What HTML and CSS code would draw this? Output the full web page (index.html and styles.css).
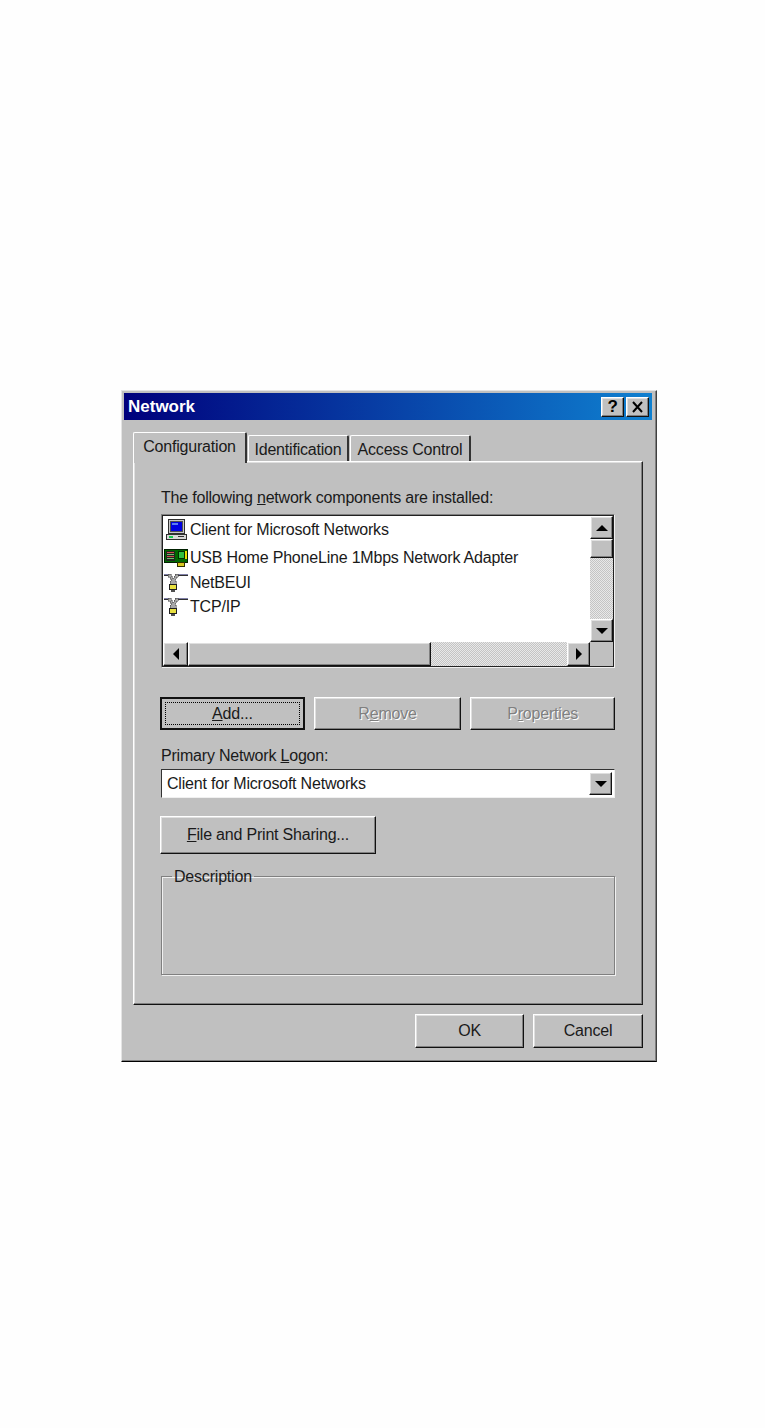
FILE: index.html
```html
<!DOCTYPE html>
<html lang="en">
<head>
    <meta charset="UTF-8">
    <title>Network</title>
    <link rel="stylesheet" href="styles.css">
</head>
<body>
    <div class="dialog">
        <div class="titlebar">
            <span class="title">Network</span>
            <div class="title-buttons">
                <div class="raised title-button help">?</div>
                <div class="raised title-button close">
                    <svg width="13" height="12" viewBox="0 0 13 12"><path d="M2 1l9 10M11 1L2 11" stroke="#000" stroke-width="2" fill="none"/></svg>
                </div>
            </div>
        </div>

        <div class="tabs">
            <div class="tab active">Configuration</div>
            <div class="tab tab-identification">Identification</div>
            <div class="tab tab-access">Access Control</div>
        </div>

        <div class="panel">
            <div class="label">The following <u>n</u>etwork components are installed:</div>

            <div class="list">
                <div class="list-items">
                    <div class="row row-client">
                        <svg class="icon" width="26" height="24" viewBox="0 0 26 24" shape-rendering="crispEdges">
                            <path d="M5.5 1.5h16v14h-16z" fill="#c8c8c8" stroke="#303030"/>
                            <path d="M7.5 3.5h12v10h-12z" fill="#0000e0" stroke="#505050"/>
                            <path d="M9 5h6v2H9z" fill="#5a7cf0"/>
                            <path d="M3.5 16.5h20v5h-20z" fill="#d8d8d8" stroke="#303030"/>
                            <path d="M6 18h4v2H6z" fill="#18c850"/>
                            <path d="M15 18h6v1h-6z" fill="#303030"/>
                        </svg>
                        Client for Microsoft Networks
                    </div>
                    <div class="row row-adapter">
                        <svg class="icon" width="26" height="20" viewBox="0 0 26 20" shape-rendering="crispEdges">
                            <path d="M1.5 1.5h23v13h-23z" fill="#006800" stroke="#002000"/>
                            <path d="M3 3h9v10H3z" fill="#202820"/>
                            <path d="M4 4h7v1H4zM4 8h7v1H4z" fill="#d05050"/>
                            <path d="M4 6h7v1H4zM4 10h7v1H4z" fill="#70c070"/>
                            <path d="M15.5 3.5h6v7h-6z" fill="#30c040" stroke="#003000"/>
                            <path d="M22 3h2v8h-2z" fill="#e8e000"/>
                            <path d="M14.5 14.5h7v4h-7z" fill="#d8c820" stroke="#303000"/>
                        </svg>
                        USB Home PhoneLine 1Mbps Network Adapter
                    </div>
                    <div class="row row-protocol">
                        <svg class="icon" width="26" height="20" viewBox="0 0 26 20" shape-rendering="crispEdges">
                            <path d="M1 1h5v1H1zM14 1h11v1H14z" fill="#8080a8"/>
                            <path d="M1 2h4v1H1zM15 2h10v1H15z" fill="#303030"/>
                            <path d="M5 1h3v2h1v2h2V3h1V1h3v3h-2v2h-1v2h1v4H7V8h1V6H7V4H5z" fill="#a8a8a8" stroke="#404040" stroke-width=".5"/>
                            <path d="M6.5 11.5h7v5h-7z" fill="#e8e040" stroke="#202020"/>
                            <path d="M8 17h4v2H8z" fill="#505050"/>
                        </svg>
                        NetBEUI
                    </div>
                    <div class="row row-protocol">
                        <svg class="icon" width="26" height="20" viewBox="0 0 26 20" shape-rendering="crispEdges">
                            <path d="M1 1h5v1H1zM14 1h11v1H14z" fill="#8080a8"/>
                            <path d="M1 2h4v1H1zM15 2h10v1H15z" fill="#303030"/>
                            <path d="M5 1h3v2h1v2h2V3h1V1h3v3h-2v2h-1v2h1v4H7V8h1V6H7V4H5z" fill="#a8a8a8" stroke="#404040" stroke-width=".5"/>
                            <path d="M6.5 11.5h7v5h-7z" fill="#e8e040" stroke="#202020"/>
                            <path d="M8 17h4v2H8z" fill="#505050"/>
                        </svg>
                        TCP/IP
                    </div>
                </div>

                <div class="vscroll">
                    <div class="raised scroll-btn"><span class="arrow up"></span></div>
                    <div class="raised vthumb"></div>
                    <div class="track"></div>
                    <div class="raised scroll-btn"><span class="arrow down"></span></div>
                </div>

                <div class="hscroll">
                    <div class="raised scroll-btn hbtn-left"><span class="arrow left"></span></div>
                    <div class="raised hthumb"></div>
                    <div class="track"></div>
                    <div class="raised scroll-btn hbtn-right"><span class="arrow right"></span></div>
                </div>
                <div class="corner"></div>
            </div>

            <div class="action-row">
                <button class="raised button default"><span class="focus"><u>A</u>dd...</span></button>
                <button class="raised button remove" disabled>R<u>e</u>move</button>
                <button class="raised button props" disabled>P<u>r</u>operties</button>
            </div>

            <div class="label logon-label">Primary Network <u>L</u>ogon:</div>
            <div class="combo">
                <span class="combo-value">Client for Microsoft Networks</span>
                <div class="raised combo-btn"><span class="arrow down"></span></div>
            </div>

            <button class="raised button sharing"><u>F</u>ile and Print Sharing...</button>

            <fieldset class="group">
                <legend>Description</legend>
            </fieldset>
        </div>

        <div class="footer">
            <button class="raised button footer-button ok">OK</button>
            <button class="raised button footer-button">Cancel</button>
        </div>
    </div>
</body>
</html>
```

FILE: styles.css
```css
body {
    margin: 0;
    background-color: #fefefe;
    font-family: "Liberation Sans", Arial, sans-serif;
    font-size: 16px;
    letter-spacing: -0.2px;
    color: #1a1a1a;
}
.dialog {
    box-sizing: border-box;
    width: 536px;
    height: 672px;
    margin: 390px 0 0 121px;
    padding: 2px 4px 0 2px;
    background-color: #c0c0c0;
    border: 1px solid;
    border-color: #e4e4e4 #404040 #000 #e4e4e4;
    box-shadow: inset -1px -1px #808080;
}
.titlebar {
    display: flex;
    align-items: center;
    justify-content: space-between;
    height: 27px;
    padding: 0 3px 0 4px;
    background: linear-gradient(90deg, #00007c, #0f80d0);
}
.title {
    color: #fff;
    font-weight: bold;
    font-size: 17px;
    letter-spacing: 0;
}
.title-buttons {
    display: flex;
    gap: 2px;
}
.raised {
    box-sizing: border-box;
    background-color: #c0c0c0;
    border: 1px solid;
    border-color: #fff #111 #111 #fff;
    box-shadow: inset -1px -1px #808080, inset 1px 1px #dfdfdf;
}
.title-button {
    display: flex;
    align-items: center;
    justify-content: center;
    width: 23px;
    height: 20px;
    color: #000;
    font-weight: bold;
    font-size: 17px;
}
.tabs {
    display: flex;
    align-items: flex-end;
    height: 29px;
    margin: 12px 0 0 9px;
}
.tab {
    box-sizing: border-box;
    height: 26px;
    padding-top: 4px;
    margin-right: 1px;
    line-height: 20px;
    text-align: center;
    background-color: #c0c0c0;
    border: solid;
    border-width: 1px 2px 0 1px;
    border-color: #fff #333 #000 #fff;
    border-radius: 2px 2px 0 0;
}
.tab.active {
    position: relative;
    width: 114px;
    height: 31px;
    margin-bottom: -2px;
}
.tab-identification {
    width: 101px;
}
.tab-access {
    width: 121px;
}
.panel {
    box-sizing: border-box;
    width: 510px;
    height: 544px;
    margin-left: 9px;
    padding: 27px 27px 0;
    border: 1px solid;
    border-color: #fff #222 #111 #fff;
    box-shadow: inset -1px -1px #808080, inset 1px 1px #dfdfdf;
}
.label {
    line-height: 18px;
}
.list {
    box-sizing: border-box;
    display: grid;
    grid-template-columns: 427px 23px;
    grid-template-rows: 126px 24px;
    width: 454px;
    height: 154px;
    margin-top: 7px;
    padding: 1px;
    background-color: #fff;
    border: 1px solid;
    border-color: #808080 #f0f0f0 #f0f0f0 #808080;
    outline: 1px solid #222;
    outline-offset: -2px;
}
.list-items {
    padding-top: 2px;
    overflow: hidden;
}
.row {
    display: flex;
    align-items: center;
    height: 24px;
    white-space: nowrap;
}
.row .icon {
    flex: none;
    margin-right: 1px;
}
.row-adapter {
    height: 26px;
    margin-top: 3px;
}
.vscroll {
    display: flex;
    flex-direction: column;
}
.hscroll {
    display: flex;
}
.track {
    flex: 1;
    background: repeating-conic-gradient(#e8e8e8 0 25%, #c4c4c4 0 50%) 0 0 / 2px 2px;
}
.scroll-btn {
    display: flex;
    align-items: center;
    justify-content: center;
    flex: none;
    width: 23px;
    height: 23px;
}
.hscroll .scroll-btn {
    height: 24px;
}
.hscroll .hbtn-left {
    width: 25px;
}
.vthumb {
    height: 19px;
}
.hthumb {
    width: 243px;
}
.corner {
    background-color: #c0c0c0;
}
.arrow {
    width: 0;
    height: 0;
    border-style: solid;
    border-color: transparent;
}
.arrow.up {
    border-width: 0 6px 6px;
    border-bottom-color: #000;
}
.arrow.down {
    border-width: 6px 6px 0;
    border-top-color: #000;
}
.arrow.left {
    border-width: 6px 6px 6px 0;
    border-right-color: #000;
}
.arrow.right {
    border-width: 6px 0 6px 6px;
    border-left-color: #000;
}
.button {
    height: 33px;
    padding: 0;
    font-family: inherit;
    font-size: 16px;
    letter-spacing: -0.2px;
    color: #1a1a1a;
}
.button:disabled {
    color: #808080;
    text-shadow: 1px 1px #fff;
}
.action-row {
    display: flex;
    gap: 9px;
    margin: 29px 0 0 -1px;
}
.default {
    width: 145px;
    padding: 4px;
    border-color: #111;
    outline: 1px solid #111;
    outline-offset: -2px;
}
.focus {
    box-sizing: border-box;
    display: block;
    height: 100%;
    line-height: 22px;
    border: 1px dotted #000;
}
.remove {
    width: 148px;
}
.props {
    width: 145px;
}
.logon-label {
    margin-top: 17px;
}
.combo {
    box-sizing: border-box;
    display: flex;
    align-items: center;
    justify-content: space-between;
    width: 454px;
    height: 29px;
    margin-top: 4px;
    padding: 2px;
    background-color: #fff;
    border: 1px solid;
    border-color: #333 #f0f0f0 #f0f0f0 #333;
}
.combo-value {
    padding: 1px 0 0 3px;
}
.combo-btn {
    display: flex;
    align-items: center;
    justify-content: center;
    width: 23px;
    height: 23px;
}
.sharing {
    display: block;
    width: 216px;
    height: 38px;
    margin: 18px 0 0 -1px;
}
.group {
    box-sizing: border-box;
    width: 454px;
    height: 108px;
    margin: 13px 0 0;
    padding: 0;
    border: 1px solid #808080;
    box-shadow: 1px 1px #f0f0f0, inset 1px 1px #f0f0f0;
}
.group legend {
    margin-left: 10px;
    padding: 1px 2px 0;
    line-height: 18px;
}
.footer {
    display: flex;
    justify-content: flex-end;
    gap: 9px;
    width: 510px;
    margin: 9px 0 0 9px;
}
.footer-button {
    width: 110px;
    height: 34px;
}
.ok {
    width: 109px;
}
```
